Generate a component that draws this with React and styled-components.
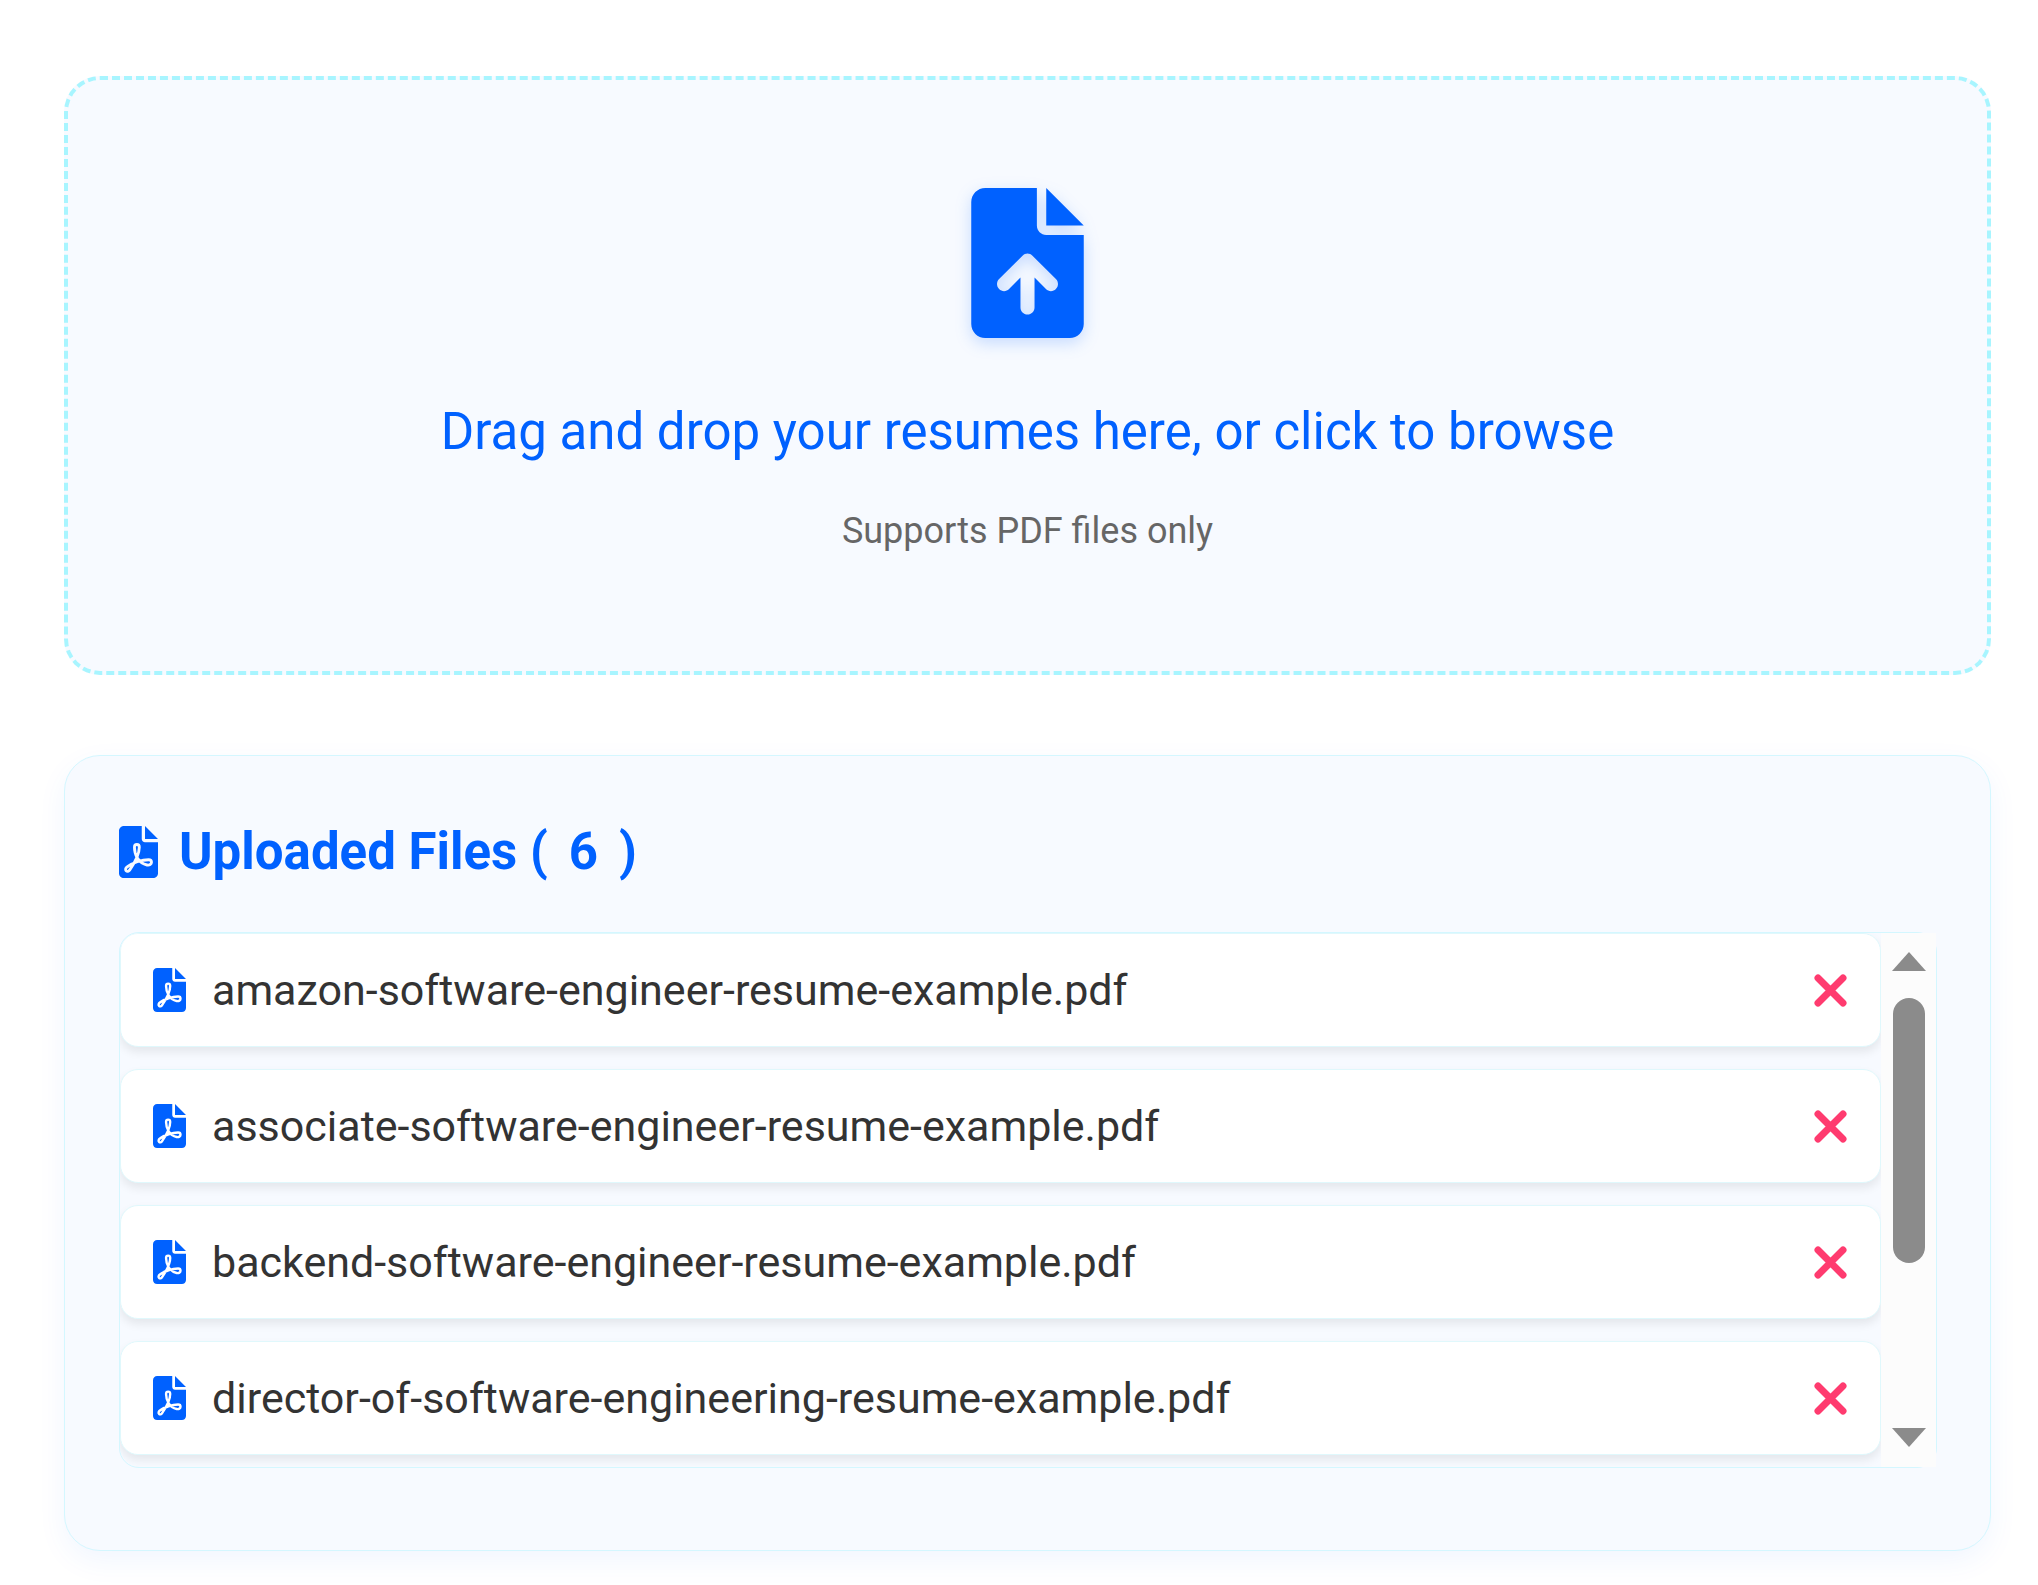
import React, { useState } from "react";
import styled, { createGlobalStyle } from "styled-components";

const GlobalStyle = createGlobalStyle`
  *, *::before, *::after { box-sizing: border-box; }
  body {
    margin: 0;
    background: #ffffff;
    font-family: Roboto, "Liberation Sans", sans-serif;
  }
`;

const Page = styled.main`
  display: flex;
  flex-direction: column;
  gap: 80px;
  padding: 76px 47px 34px 64px;
`;

const DropZone = styled.label`
  display: flex;
  flex-direction: column;
  align-items: center;
  padding: 108px 48px 119px;
  border: 4px dashed #a8f5ff;
  border-radius: 36px;
  background: #f7faff;
  text-align: center;
  cursor: pointer;
`;

const HiddenInput = styled.input`
  position: absolute;
  width: 1px;
  height: 1px;
  opacity: 0;
  overflow: hidden;
`;

const UploadIcon = styled.svg`
  width: 113px;
  height: 150px;
  fill: #0061ff;
  filter: drop-shadow(0 5px 8px rgba(0, 97, 255, 0.2));
`;

const DropTitle = styled.span`
  margin-top: 64px;
  font-size: 51px;
  line-height: 60px;
  color: #0061ff;
`;

const DropHint = styled.span`
  margin-top: 48px;
  font-size: 36px;
  line-height: 42px;
  color: #666666;
`;

const Card = styled.section`
  padding: 66px 53px 82px 54px;
  border: 1px solid #d4f7ff;
  border-radius: 36px;
  background: #f7faff;
  box-shadow: 0 10px 30px rgba(0, 97, 255, 0.06);
`;

const CardTitle = styled.h2`
  display: flex;
  align-items: center;
  gap: 21px;
  margin: 0 0 50px;
  font-size: 51px;
  font-weight: 700;
  line-height: 60px;
  color: #0061ff;
`;

const PdfSvg = styled.svg`
  flex: none;
  width: ${(p) => p.$width}px;
  height: ${(p) => p.$height}px;
  fill: #0061ff;
`;

const ListFrame = styled.div`
  display: flex;
  border: 1px solid #d4f7ff;
  border-radius: 20px;
`;

const FileList = styled.ul`
  flex: 1;
  min-width: 0;
  display: flex;
  flex-direction: column;
  gap: 22px;
  margin: 0;
  padding: 0 0 12px;
  list-style: none;
  overflow: hidden;
  border-radius: 20px 0 0 20px;
`;

const FileRow = styled.li`
  display: flex;
  align-items: center;
  gap: 26px;
  height: 114px;
  padding: 0 33px 0 32px;
  border: 1px solid #e0f8fc;
  border-radius: 18px;
  background: #ffffff;
  box-shadow: 0 5px 10px rgba(0, 0, 0, 0.08);
`;

const FileName = styled.span`
  flex: 1;
  min-width: 0;
  font-size: 43px;
  line-height: 50px;
  color: #333333;
`;

const RemoveButton = styled.button`
  display: flex;
  padding: 0;
  border: 0;
  background: none;
  cursor: pointer;

  svg {
    width: 33px;
    height: 33px;
    stroke: #ff3b6f;
    stroke-width: 7;
    stroke-linecap: round;
  }
`;

const ScrollTrack = styled.div`
  flex: none;
  display: flex;
  flex-direction: column;
  align-items: center;
  width: 55px;
  padding: 19px 0 20px;
  background: #fcfcfc;
`;

const ScrollArrow = styled.svg`
  flex: none;
  width: 34px;
  height: 19px;
  fill: #8b8b8b;
`;

const ScrollThumb = styled.div`
  flex: none;
  width: 32px;
  height: 265px;
  margin: 27px 0 auto;
  border-radius: 16px;
  background: #8b8b8b;
`;

const SHEET =
  "M256 0v128h128L256 0zM224 128V0H48C21.5 0 0 21.5 0 48v416c0 26.5 21.5 48 48 48h288c26.5 0 48-21.5 48-48V160H256c-17.7 0-32-14.3-32-32z";

const ARROW =
  "M289 345c-4.7 4.7-10.8 7-17 7s-12.3-2.3-17-7L216 305.900V408c0 13.3-10.7 24-24 24s-24-10.7-24-24V305.9L129 345c-9.4 9.4-24.6 9.4-34 0s-9.4-24.6 0-34l80-80c9.4-9.4 24.6-9.4 34 0l80 80c9.4 9.4 9.4 24.6 0 34z";

function PdfIcon({ width, height, cutout }) {
  return (
    <PdfSvg viewBox="0 0 384 512" $width={width} $height={height} aria-hidden="true">
      <path d={SHEET} />
      <path
        d="M176 182C158 182 152 194 152 208C152 278 188 364 276 384C300 389 320 377 320 358C320 340 308 332 292 332C228 332 128 362 80 402C64 414 61 430 70 440C80 450 96 448 106 432C148 370 200 270 200 208C200 194 194 182 176 182Z"
        fill="none"
        stroke={cutout}
        strokeWidth="28"
        strokeLinejoin="round"
      />
    </PdfSvg>
  );
}

const INITIAL_FILES = [
  "amazon-software-engineer-resume-example.pdf",
  "associate-software-engineer-resume-example.pdf",
  "backend-software-engineer-resume-example.pdf",
  "director-of-software-engineering-resume-example.pdf",
];

export default function App() {
  const [files, setFiles] = useState(INITIAL_FILES);
  const remove = (name) => setFiles((list) => list.filter((f) => f !== name));

  return (
    <>
      <GlobalStyle />
      <Page>
        <DropZone htmlFor="resumes">
          <HiddenInput id="resumes" type="file" accept="application/pdf" multiple />
          <UploadIcon viewBox="0 0 384 512" aria-hidden="true">
            <path fillRule="evenodd" d={SHEET + ARROW} />
          </UploadIcon>
          <DropTitle>Drag and drop your resumes here, or click to browse</DropTitle>
          <DropHint>Supports PDF files only</DropHint>
        </DropZone>

        <Card>
          <CardTitle>
            <PdfIcon width={39} height={52} cutout="#f7faff" />
            <span>Uploaded Files (</span>
            <span>6</span>
            <span>)</span>
          </CardTitle>
          <ListFrame>
            <FileList>
              {files.map((name) => (
                <FileRow key={name}>
                  <PdfIcon width={33} height={44} cutout="#ffffff" />
                  <FileName>{name}</FileName>
                  <RemoveButton type="button" aria-label={`Remove ${name}`} onClick={() => remove(name)}>
                    <svg viewBox="0 0 33 33" aria-hidden="true">
                      <path d="M4 4L29 29M29 4L4 29" />
                    </svg>
                  </RemoveButton>
                </FileRow>
              ))}
            </FileList>
            <ScrollTrack aria-hidden="true">
              <ScrollArrow viewBox="0 0 34 19">
                <path d="M17 0L34 19H0z" />
              </ScrollArrow>
              <ScrollThumb />
              <ScrollArrow viewBox="0 0 34 19">
                <path d="M0 0H34L17 19z" />
              </ScrollArrow>
            </ScrollTrack>
          </ListFrame>
        </Card>
      </Page>
    </>
  );
}
